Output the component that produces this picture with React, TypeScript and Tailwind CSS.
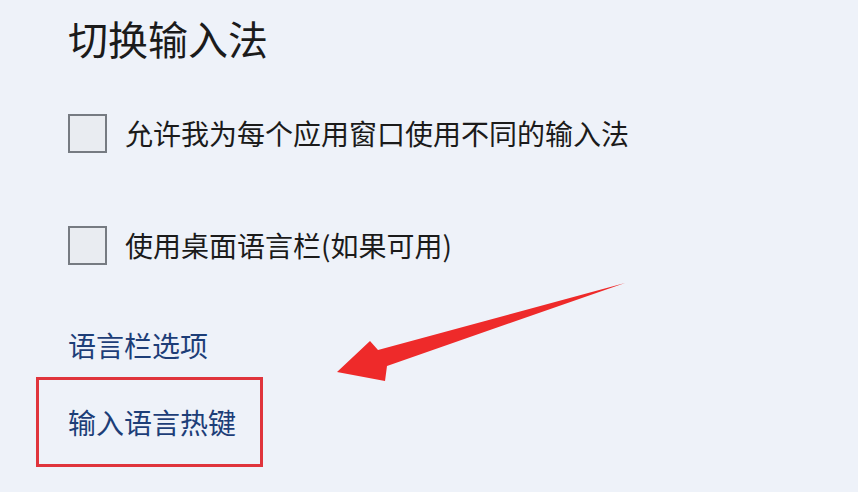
const Checkbox = () => (
  <div className="w-[39px] h-[39px] shrink-0 border-2 border-[#767b82] bg-[#e9ecf1]" />
);

const App = () => {
  return (
    <main
      className="relative w-[858px] h-[492px] overflow-hidden bg-[#eef2f9] text-[#1b1b1b]"
      style={{ fontFamily: '"Noto Sans CJK SC", "Noto Sans", sans-serif' }}
    >
      <div className="flex flex-col pt-[18px]">
        <h1 className="pl-[68px] text-[40px] leading-[40px] font-normal">切换输入法</h1>

        <div className="flex flex-col gap-[73px] mt-[56px] pl-[68px]">
          <label className="flex items-center gap-[18px]">
            <Checkbox />
            <span className="text-[28px] leading-[39px]">允许我为每个应用窗口使用不同的输入法</span>
          </label>
          <label className="flex items-center gap-[18px]">
            <Checkbox />
            <span className="text-[28px] leading-[39px]">使用桌面语言栏(如果可用)</span>
          </label>
        </div>

        <a className="mt-[66px] pl-[68px] text-[28px] leading-[28px] text-[#1d3e78]">语言栏选项</a>

        <div className="ml-[36px] mt-[18px] w-[227px] h-[90px] border-[3px] border-[#e0343c] flex items-center pl-[29px]">
          <a className="text-[28px] leading-[28px] text-[#1d3e78]">输入语言热键</a>
        </div>
      </div>

      <svg className="absolute inset-0 pointer-events-none" width="858" height="492" viewBox="0 0 858 492">
        <polygon
          points="337,372 370,341 378,350 625,283 387,366 385,381"
          fill="#ee2a2a"
        />
      </svg>
    </main>
  );
};

export default App;
